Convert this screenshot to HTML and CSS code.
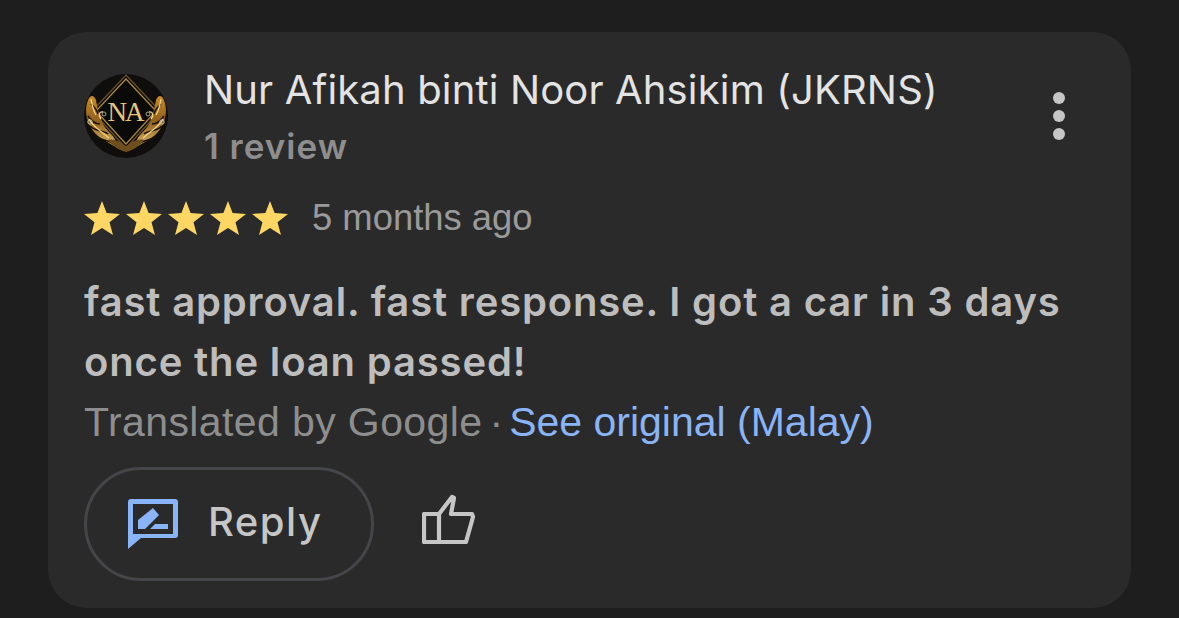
FILE: index.html
```html
<!DOCTYPE html>
<html lang="en">
<head>
<meta charset="utf-8">
<title>Review</title>
<link rel="stylesheet" href="styles.css">
</head>
<body>
<main class="card">
  <header class="head">
    <svg class="avatar" viewBox="0 0 84 84" aria-hidden="true">
      <defs>
        <linearGradient id="gold" x1="0" y1="0" x2="0" y2="1">
          <stop offset="0" stop-color="#c98a2a"/>
          <stop offset=".5" stop-color="#8f5f1b"/>
          <stop offset="1" stop-color="#d8b468"/>
        </linearGradient>
        <g id="wing">
          <path d="M5 24 C0 34 2 44 6 52 C11 62 20 66 30 72 C33 68 31 64 27 60 C21 54 18 50 17 44 C14 38 13 32 12 26 C10 21 7 21 5 24 Z" fill="url(#gold)"/>
          <path d="M4 42 C8 48 12 50 16 50 M6 52 C12 58 20 56 24 60 M7 30 C10 33 13 35 14 40 M12 63 C18 66 24 66 30 70" fill="none" stroke="#1a130a" stroke-width="1.6"/>
          <path d="M7 25 C8 31 9 36 12 41 M5 45 C9 53 16 56 25 64 M17 45 C14 42 15 37 19 38" fill="none" stroke="#f0cf7e" stroke-width="1.4"/>
          <circle cx="20" cy="40" r="2" fill="none" stroke="#a8a290" stroke-width="1"/>
          <circle cx="6" cy="48" r="2.2" fill="none" stroke="#c9c3ad" stroke-width="1"/>
        </g>
      </defs>
      <circle cx="42" cy="42" r="42" fill="#0f0e0c"/>
      <path d="M42 1 L76 37 L42 74 L8 37 Z" fill="none" stroke="#6a5226" stroke-width="1.2"/>
      <path d="M42 5 L72 37 L42 70 L12 37 Z" fill="#0a0a09" stroke="#b08a48" stroke-width="1.2"/>
      <use href="#wing"/>
      <use href="#wing" transform="matrix(-1 0 0 1 84 0)"/>
      <path d="M24 66 C32 64 38 70 42 72 C46 70 52 64 60 66 C54 74 48 76 42 78 C36 76 30 74 24 66 Z" fill="#6f4e1d"/>
      <text class="mono" x="41" y="47" text-anchor="middle">NA</text>
    </svg>
    <div class="who">
      <div class="name">Nur Afikah binti Noor Ahsikim (JKRNS)</div>
      <div class="count">1 review</div>
    </div>
    <div class="more" aria-label="More"><i></i><i></i><i></i></div>
  </header>

  <div class="rating">
    <div class="stars">
      <svg viewBox="0 0 36 34"><path d="M18 0 L22.6 12 L36 12.9 L25.5 21.2 L29 34 L18 27 L7 34 L10.5 21.2 L0 12.9 L13.4 12 Z"/></svg>
      <svg viewBox="0 0 36 34"><path d="M18 0 L22.6 12 L36 12.9 L25.5 21.2 L29 34 L18 27 L7 34 L10.5 21.2 L0 12.9 L13.4 12 Z"/></svg>
      <svg viewBox="0 0 36 34"><path d="M18 0 L22.6 12 L36 12.9 L25.5 21.2 L29 34 L18 27 L7 34 L10.5 21.2 L0 12.9 L13.4 12 Z"/></svg>
      <svg viewBox="0 0 36 34"><path d="M18 0 L22.6 12 L36 12.9 L25.5 21.2 L29 34 L18 27 L7 34 L10.5 21.2 L0 12.9 L13.4 12 Z"/></svg>
      <svg viewBox="0 0 36 34"><path d="M18 0 L22.6 12 L36 12.9 L25.5 21.2 L29 34 L18 27 L7 34 L10.5 21.2 L0 12.9 L13.4 12 Z"/></svg>
    </div>
    <span class="age">5 months ago</span>
  </div>

  <p class="text">fast approval. fast response. I got a car in 3 days<br>once the loan passed!</p>
  <div class="trans"><span class="by">Translated by Google</span><span class="dot">·</span><a class="orig">See original (Malay)</a></div>

  <div class="actions">
    <button class="reply" type="button">
      <svg class="reply-ico" viewBox="0 0 50 50" aria-hidden="true">
        <path fill-rule="evenodd" d="M3 0 H47 Q50 0 50 3 V36 Q50 39 47 39 H13 L0 50 V3 Q0 0 3 0 Z M5 5 V35 H45 V5 Z"/>
        <path d="M10 30 V21 L25 9 L31 16 L17 30 Z M22 30 L27 25 H40 V30 Z"/>
      </svg>
      <span>Reply</span>
    </button>
    <svg class="thumb" viewBox="0 0 54 50" aria-hidden="true">
      <path d="M2 20 H17 V48 H2 Z M17 20 L30 3 L32 4 L29 20 H50 L51 23 L44 48 H17" fill="none" stroke="#c6c6c6" stroke-width="4.2" stroke-linejoin="round"/>
    </svg>
  </div>
</main>
</body>
</html>
```
FILE: styles.css
```css
html, body {
  margin: 0;
  height: 100%;
  background: #1e1e1e;
  overflow: hidden;
}
body {
  padding: 32px 48px 10px;
  box-sizing: border-box;
  font-family: Inter, "Liberation Sans", sans-serif;
}
.card {
  height: 576px;
  box-sizing: border-box;
  background: #2a2a2a;
  border-radius: 38px;
  padding: 36px 36px 0;
}
.head {
  display: flex;
  align-items: flex-start;
  height: 100px;
}
.avatar {
  width: 84px;
  height: 84px;
  margin-top: 6px;
  flex: none;
}
.mono {
  font-family: "Liberation Serif", serif;
  font-size: 27px;
  letter-spacing: -2px;
  fill: #e8c47a;
}
.who {
  margin-left: 36px;
  flex: 1;
}
.name {
  font-size: 40px;
  line-height: 44px;
  letter-spacing: 0.15px;
  color: #e3e3e3;
}
.count {
  font-size: 35px;
  line-height: 40px;
  margin-top: 14px;
  font-weight: 600;
  letter-spacing: 1px;
  color: #8e8e8e;
}
.more {
  display: flex;
  flex-direction: column;
  gap: 6px;
  margin: 24px 30px 0 0;
}
.more i {
  display: block;
  width: 12px;
  height: 12px;
  border-radius: 50%;
  background: #c6c6c6;
}
.rating {
  display: flex;
  align-items: center;
  height: 40px;
  margin-top: 30px;
}
.stars {
  display: flex;
  gap: 6px;
}
.stars svg {
  width: 36px;
  height: 34px;
  fill: #fdd663;
}
.age {
  margin-left: 24px;
  font-family: "Liberation Sans", sans-serif;
  font-size: 36.4px;
  color: #9a9a9a;
}
.text {
  margin: 34px 0 0;
  font-size: 40px;
  line-height: 60px;
  letter-spacing: 0.84px;
  font-weight: 600;
  color: #bdbdbd;
}
.trans {
  display: flex;
  align-items: center;
  font-family: "Liberation Sans", sans-serif;
  font-size: 41px;
  line-height: 60px;
  color: #8e8e8e;
}
.by {
  letter-spacing: 0.4px;
}
.dot {
  margin: 0 6px 0 7px;
}
.orig {
  color: #8ab4f8;
}
.actions {
  display: flex;
  align-items: center;
  gap: 48px;
  margin-top: 15px;
}
.reply {
  display: flex;
  align-items: center;
  gap: 30px;
  box-sizing: border-box;
  width: 290px;
  height: 114px;
  padding: 0 0 0 41px;
  background: none;
  border: 3px solid #454649;
  border-radius: 57px;
  font: 500 40px Inter, "Liberation Sans", sans-serif;
  letter-spacing: 1.5px;
  color: #c6c6c6;
}
.reply-ico {
  width: 50px;
  height: 50px;
  fill: #8ab4f8;
  flex: none;
}
.reply span {
  margin-bottom: 6px;
}
.thumb {
  width: 54px;
  height: 50px;
  margin-bottom: 10px;
}
```
